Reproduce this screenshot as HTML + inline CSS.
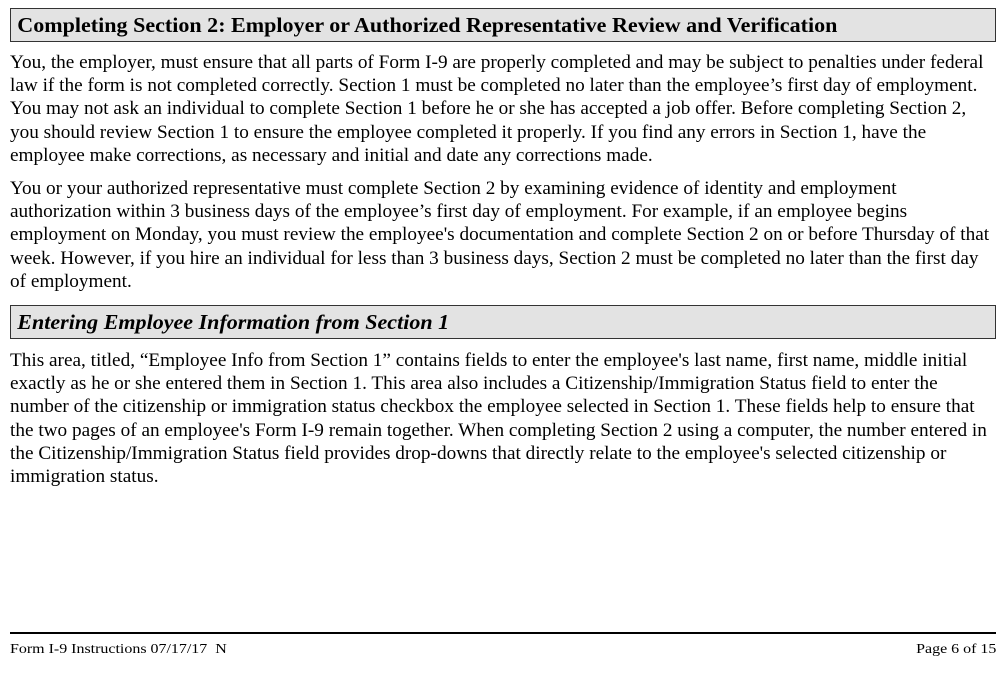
<!DOCTYPE html>
<html><head><meta charset="utf-8"><style>
html,body{margin:0;padding:0;background:#fff;width:1006px;height:684px;overflow:hidden;position:relative}
body{font-family:"Liberation Serif",serif;color:#000}
.hdr{position:absolute;left:10px;width:986px;background:#e3e3e3;border:1px solid #333;box-sizing:border-box;font-weight:bold;font-size:21px;white-space:nowrap}
.hdr span{display:inline-block;transform:scaleX(1.05);transform-origin:left;padding-left:6px}
.p{position:absolute;left:10px;font-size:18.5px;line-height:23.2px;white-space:nowrap;transform:scaleX(1.04);transform-origin:left top}
.rule{position:absolute;left:10px;width:986px;top:632px;height:2px;background:#000}
.ft{position:absolute;top:642px;font-size:14px;white-space:nowrap}
</style></head><body>
<div class="hdr" style="top:8px;height:34px;line-height:32px"><span>Completing Section 2: Employer or Authorized Representative Review and Verification</span></div>
<div class="p" style="top:52px">You, the employer, must ensure that all parts of Form I-9 are properly completed and may be subject to penalties under federal<br>law if the form is not completed correctly. Section 1 must be completed no later than the employee’s first day of employment.<br>You may not ask an individual to complete Section 1 before he or she has accepted a job offer. Before completing Section 2,<br>you should review Section 1 to ensure the employee completed it properly. If you find any errors in Section 1, have the<br>employee make corrections, as necessary and initial and date any corrections made.</div>
<div class="p" style="top:178px">You or your authorized representative must complete Section 2 by examining evidence of identity and employment<br>authorization within 3 business days of the employee’s first day of employment. For example, if an employee begins<br>employment on Monday, you must review the employee's documentation and complete Section 2 on or before Thursday of that<br>week. However, if you hire an individual for less than 3 business days, Section 2 must be completed no later than the first day<br>of employment.</div>
<div class="hdr" style="top:305px;height:34px;line-height:32px;font-style:italic"><span>Entering Employee Information from Section 1</span></div>
<div class="p" style="top:350px">This area, titled, “Employee Info from Section 1” contains fields to enter the employee's last name, first name, middle initial<br>exactly as he or she entered them in Section 1. This area also includes a Citizenship/Immigration Status field to enter the<br>number of the citizenship or immigration status checkbox the employee selected in Section 1. These fields help to ensure that<br>the two pages of an employee's Form I-9 remain together. When completing Section 2 using a computer, the number entered in<br>the Citizenship/Immigration Status field provides drop-downs that directly relate to the employee's selected citizenship or<br>immigration status.</div>
<div class="rule"></div>
<div class="ft" style="left:10px;transform:scaleX(1.14);transform-origin:left">Form I-9 Instructions 07/17/17&nbsp; N</div>
<div class="ft" style="right:10px;transform:scaleX(1.14);transform-origin:right">Page 6 of 15</div>
</body></html>
